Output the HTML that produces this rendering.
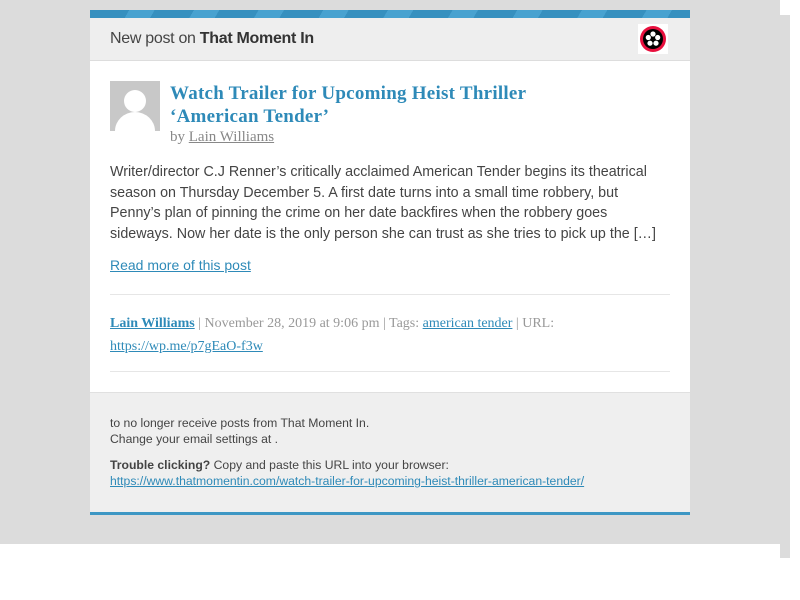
<!DOCTYPE html>
<html><head><meta charset="utf-8"><style>
*{margin:0;padding:0;box-sizing:border-box}
body{width:800px;height:600px;background:#fff;position:relative;overflow:hidden;font-family:"Liberation Sans",sans-serif}
.bg{position:absolute;left:0;top:0;width:780px;height:544px;background:#dcdcdc}
.strip{position:absolute;left:780px;top:15px;width:10px;height:543px;background:#dcdcdc}
.card{position:absolute;left:90px;top:10px;width:600px;height:505px;background:#fff}
.top{height:8px;background:repeating-linear-gradient(120deg,#3690bf 0 34px,#48a2d0 34px 56px)}
.hd{height:43px;background:#eee;border-bottom:1px solid #ddd;position:relative;padding:13px 0 0 20px;font-size:16px;color:#444;line-height:1;letter-spacing:-0.3px}
.hd b{color:#333}
.logo{position:absolute;left:548px;top:6px;width:30px;height:30px;background:#fff}
a{color:#2e8ab8}
.av{position:absolute;left:20px;top:71px;width:50px;height:50px;background:#c8c8c8;overflow:hidden}
.ttl{position:absolute;left:80px;top:72px;font-family:"Liberation Serif",serif;font-weight:bold;font-size:19px;line-height:23px;color:#2e8ab8;letter-spacing:0.25px}
.by{position:absolute;left:80px;top:119px;font-family:"Liberation Serif",serif;font-size:15px;color:#888}
.by a{color:#888}
.ex{position:absolute;left:20px;top:152px;width:580px;font-size:14.3px;line-height:20.5px;color:#444;white-space:nowrap}
.rm{position:absolute;left:20px;top:247px;font-size:14px}
.hr{position:absolute;left:20px;width:560px;height:1px;background:#e6e6e6}
.meta{position:absolute;left:20px;top:302px;width:570px;font-family:"Liberation Serif",serif;font-size:14px;line-height:23px;color:#999}
.meta b a{font-weight:bold}
.ft{position:absolute;left:0;top:382px;width:600px;height:120px;background:#efefef;border-top:1px solid #e0e0e0;padding:22px 20px 0;font-size:12.2px;line-height:16px;color:#444}
.bl{position:absolute;left:0;top:502px;width:600px;height:3px;background:#3d97c4}
</style></head><body>
<div class="bg"></div><div class="strip"></div>
<div class="card">
<div class="top"></div>
<div class="hd">New post on <b>That Moment In</b>
<div class="logo"><svg width="30" height="30" viewBox="0 0 30 30"><circle cx="15" cy="15" r="13" fill="#e8103e"/><circle cx="15" cy="15" r="10" fill="#000"/><circle cx="15" cy="10" r="2.6" fill="#fff"/><circle cx="10.3" cy="13.5" r="2.6" fill="#fff"/><circle cx="19.7" cy="13.5" r="2.6" fill="#fff"/><circle cx="12" cy="19.2" r="2.6" fill="#fff"/><circle cx="18" cy="19.2" r="2.6" fill="#fff"/></svg></div></div>
<div class="av"><svg width="50" height="50"><circle cx="25" cy="20" r="11" fill="#fff"/><ellipse cx="25" cy="50" rx="20" ry="19" fill="#fff"/></svg></div>
<div class="ttl">Watch Trailer for Upcoming Heist Thriller<br>‘American Tender’</div>
<div class="by">by <a href="#">Lain Williams</a></div>
<div class="ex">Writer/director C.J Renner’s critically acclaimed American Tender begins its theatrical<br>season on Thursday December 5. A first date turns into a small time robbery, but<br>Penny’s plan of pinning the crime on her date backfires when the robbery goes<br>sideways. Now her date is the only person she can trust as she tries to pick up the […]</div>
<div class="rm"><a href="#">Read more of this post</a></div>
<div class="hr" style="top:284px"></div>
<div class="meta"><b><a href="#">Lain Williams</a></b> | November 28, 2019 at 9:06 pm | Tags: <a href="#">american tender</a> | URL:<br><a href="#">https://wp.me/p7gEaO-f3w</a></div>
<div class="hr" style="top:361px"></div>
<div class="ft">to no longer receive posts from That Moment In.<br>Change your email settings at .<div style="height:10px"></div><b>Trouble clicking?</b> Copy and paste this URL into your browser:<br><a href="#">https://www.thatmomentin.com/watch-trailer-for-upcoming-heist-thriller-american-tender/</a></div>
<div class="bl"></div>
</div>
</body></html>
